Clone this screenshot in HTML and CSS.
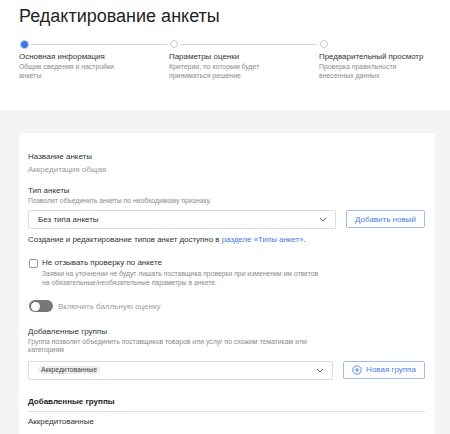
FILE: index.html
```html
<!DOCTYPE html>
<html lang="ru">
<head>
<meta charset="utf-8">
<link rel="stylesheet" href="styles.css">
</head>
<body>
<header class="header">
  <h1 class="title">Редактирование анкеты</h1>
  <ol class="steps">
    <li class="step step-active">
      <div class="step-track"><span class="dot dot-active"></span><span class="line"></span></div>
      <div class="step-name">Основная информация</div>
      <div class="step-desc">Общие сведения и настройки<br>анкеты</div>
    </li>
    <li class="step">
      <div class="step-track"><span class="dot"></span><span class="line"></span></div>
      <div class="step-name">Параметры оценки</div>
      <div class="step-desc">Критерии, по которым будет<br>приниматься решение</div>
    </li>
    <li class="step">
      <div class="step-track"><span class="dot"></span></div>
      <div class="step-name">Предварительный просмотр</div>
      <div class="step-desc">Проверка правильности<br>внесенных данных</div>
    </li>
  </ol>
</header>
<main class="area">
  <section class="card">
    <div class="label">Название анкеты</div>
    <div class="value">Аккредитация общая</div>

    <div class="label label-gap">Тип анкеты</div>
    <div class="hint">Позволит объединить анкеты по необходимому признаку.</div>
    <div class="row row-type">
      <div class="select select-type">
        <span class="select-text">Без типа анкеты</span>
        <svg class="chevron" width="8" height="5" viewBox="0 0 8 5"><polyline points="1,1 4,4 7,1" fill="none" stroke="#666" stroke-width="1"/></svg>
      </div>
      <button class="btn btn-add">Добавить новый</button>
    </div>
    <p class="note">Создание и редактирование типов анкет доступно в <a class="link" href="#">разделе «Типы анкет»</a>.</p>

    <div class="check-row">
      <span class="checkbox"></span>
      <div class="check-body">
        <div class="check-label">Не отзывать проверку по анкете</div>
        <div class="check-hint">Заявки на уточнении не будут лишать поставщика проверки при изменении им ответов<br>на обязательные/необязательные параметры в анкете.</div>
      </div>
    </div>

    <div class="toggle-row">
      <span class="toggle"><span class="knob"></span></span>
      <span class="toggle-label">Включить балльную оценку</span>
    </div>

    <div class="label label-groups">Добавленные группы</div>
    <div class="hint hint-groups">Группа позволит объединить поставщиков товаров или услуг по схожим тематикам или<br>категориям</div>
    <div class="row row-groups">
      <div class="select select-groups">
        <span class="tag">Аккредитованные</span>
        <svg class="chevron" width="8" height="5" viewBox="0 0 8 5"><polyline points="1,1 4,4 7,1" fill="none" stroke="#666" stroke-width="1"/></svg>
      </div>
      <button class="btn btn-group">
        <svg class="plus" width="10" height="10" viewBox="0 0 10 10"><circle cx="5" cy="5" r="4.2" fill="none" stroke="#4a7fe0" stroke-width="0.9"/><path d="M5 2.8V7.2M2.8 5H7.2" stroke="#4a7fe0" stroke-width="0.9"/></svg>
        <span>Новая группа</span>
      </button>
    </div>

    <div class="table-head">Добавленные группы</div>
    <div class="table-row">Аккредитованные</div>
  </section>
</main>
</body>
</html>
```
FILE: styles.css
```css
* { box-sizing: border-box; }
html, body { margin: 0; padding: 0; }
body {
  font-family: "Liberation Sans", Arial, sans-serif;
  color: #333;
  background: #fff;
  width: 450px;
  height: 434px;
  overflow: hidden;
}
.header {
  height: 110px;
  padding: 5px 0 0 19px;
}
.title {
  margin: 0;
  font-size: 18px;
  line-height: 22px;
  font-weight: normal;
  color: #1f1f1f;
}
.steps {
  list-style: none;
  margin: 12px 0 0;
  padding: 0;
  display: grid;
  grid-template-columns: 150px 150px 131px;
}
.step-track {
  display: flex;
  align-items: center;
  height: 10px;
  padding-left: 1px;
}
.dot {
  flex: none;
  width: 8px;
  height: 8px;
  border-radius: 50%;
  border: 1px solid #c9c9c9;
  background: #fff;
}
.dot-active {
  width: 9px;
  height: 9px;
  border: 1.5px solid #b9d0f7;
  background: #3577e5;
  margin-left: -0.5px;
}
.line {
  flex: 1;
  height: 1px;
  background: #d6d6d6;
  margin: 0 2px 0 2px;
}
.step-name {
  margin-top: 3px;
  font-size: 7.95px;
  line-height: 10px;
  color: #333;
}
.step-desc {
  margin-top: -0.5px;
  font-size: 6.9px;
  line-height: 9.5px;
  color: #8a8a8a;
}
.area {
  background: #f4f4f4;
  height: 324px;
  padding: 23px 15px 0 19px;
}
.card {
  background: #fff;
  border-radius: 4px;
  height: 320px;
  padding: 19px 10px 0 9px;
}
.label {
  font-size: 8px;
  line-height: 10px;
  color: #333;
}
.value {
  margin-top: 3px;
  font-size: 8px;
  line-height: 10px;
  color: #999;
}
.label-gap { margin-top: 11px; }
.hint {
  margin-top: 1px;
  font-size: 6.85px;
  line-height: 8px;
  color: #8a8a8a;
}
.row {
  display: flex;
  gap: 10px;
}
.row-type { margin-top: 5px; height: 19px; }
.select {
  flex: 1;
  display: flex;
  align-items: center;
  justify-content: space-between;
  border: 1px solid #dcdcdc;
  border-radius: 2px;
  background: #fff;
  padding: 0 8px 0 9px;
}
.select-text {
  font-size: 8px;
  color: #333;
}
.chevron { flex: none; }
.btn {
  flex: none;
  font-family: inherit;
  background: #fff;
  border: 1px solid #9dbcf1;
  border-radius: 2px;
  color: #4a7fe0;
  font-size: 8px;
  padding: 0;
  display: flex;
  align-items: center;
  justify-content: center;
}
.btn-add { width: 79px; height: 18px; }
.note {
  margin: 6px 0 0;
  font-size: 7.9px;
  line-height: 10px;
  color: #333;
}
.link {
  color: #3d7be0;
  text-decoration: none;
}
.check-row {
  display: flex;
  margin-top: 13px;
}
.checkbox {
  flex: none;
  width: 9px;
  height: 9px;
  margin: 1px 4px 0 1px;
  border: 1px solid #9a9a9a;
  border-radius: 2px;
  background: #fff;
}
.check-label {
  font-size: 8px;
  line-height: 10px;
  color: #333;
}
.check-hint {
  margin-top: 0.5px;
  font-size: 6.8px;
  line-height: 9.5px;
  color: #8a8a8a;
}
.toggle-row {
  display: flex;
  align-items: center;
  margin-top: 12px;
  height: 13px;
}
.toggle {
  flex: none;
  width: 24px;
  height: 12px;
  border-radius: 6px;
  background: #777;
  margin-left: 1px;
  padding: 1.5px;
  display: flex;
}
.knob {
  width: 9px;
  height: 9px;
  border-radius: 50%;
  background: #fff;
}
.toggle-label {
  margin-left: 5px;
  font-size: 8px;
  color: #9a9a9a;
}
.label-groups { margin-top: 14px; }
.hint-groups { margin-top: 1px; line-height: 8.5px; }
.row-groups { margin-top: 6px; height: 19px; }
.select-groups { padding-left: 9px; }
.tag {
  font-size: 6.8px;
  line-height: 8px;
  padding: 0 3px;
  background: #eeeeee;
  border-radius: 4px;
  color: #444;
}
.btn-group { width: 82px; height: 18px; gap: 4px; }
.plus { flex: none; }
.table-head {
  margin-top: 17px;
  font-size: 8px;
  line-height: 10px;
  font-weight: bold;
  color: #222;
  padding-bottom: 4px;
  border-bottom: 1px solid #dedede;
}
.table-row {
  margin-top: 5px;
  font-size: 8px;
  line-height: 10px;
  color: #333;
}
```
